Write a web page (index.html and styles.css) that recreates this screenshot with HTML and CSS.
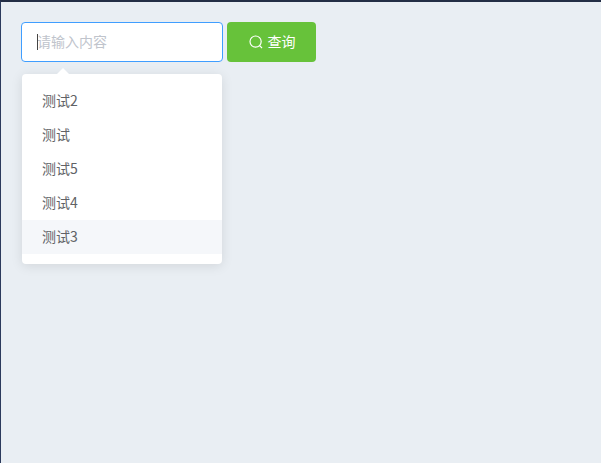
FILE: index.html
```html
<!DOCTYPE html>
<html lang="zh">
<head>
<meta charset="utf-8">
<title>查询</title>
<link rel="stylesheet" href="styles.css">
</head>
<body>
<div class="page">
  <div class="search">
    <div class="field">
      <div class="input"><span class="caret"></span><span class="placeholder">请输入内容</span></div>
      <div class="dropdown">
        <span class="arrow"></span>
        <ul class="list">
          <li class="item">测试2</li>
          <li class="item">测试</li>
          <li class="item">测试5</li>
          <li class="item">测试4</li>
          <li class="item hover">测试3</li>
        </ul>
      </div>
    </div>
    <button class="btn" type="button">
      <svg class="icon" width="14" height="14" viewBox="0 0 14 14" fill="none" stroke="#fff" stroke-width="1.2"><circle cx="6.6" cy="6.6" r="5.6"/><path d="M10.6 10.6L13 13"/></svg>
      <span class="label">查询</span>
    </button>
  </div>
</div>
</body>
</html>
```
FILE: styles.css
```css
* { box-sizing: border-box; }
html, body { margin: 0; height: 100%; }
body { font-family: "Noto Sans CJK SC", "Liberation Sans", sans-serif; overflow: hidden; }
.page {
  height: 463px;
  background: #e9eef3;
  border-top: 2px solid #232e45;
  border-left: 1px solid #2b3a5c;
  padding: 20px 20px;
}
.search { display: flex; gap: 4px; align-items: flex-start; }
.field { position: relative; width: 202px; }
.input {
  position: relative;
  height: 40px;
  background: #fff;
  border: 1px solid #409eff;
  border-radius: 4px;
  padding: 0 0 2px 15px;
  display: flex;
  align-items: center;
  font-size: 14px;
  color: #c0c4cc;
}
.caret { position: absolute; left: 15px; top: 11px; width: 1px; height: 16px; background: #444; }
.dropdown {
  position: absolute;
  left: 1px;
  top: 52px;
  width: 200px;
  background: #fff;
  border-radius: 4px;
  box-shadow: 0 2px 12px rgba(0,0,0,.1);
}
.arrow {
  position: absolute;
  left: 35px;
  top: -6px;
  width: 0;
  height: 0;
  border-left: 6px solid transparent;
  border-right: 6px solid transparent;
  border-bottom: 6px solid #fff;
}
.list { list-style: none; margin: 0; padding: 10px 0; }
.item { height: 34px; line-height: 32px; padding: 0 20px; font-size: 14px; color: #606266; }
.hover { background: #f5f7fa; }
.btn {
  width: 89px;
  height: 40px;
  border: 0;
  border-radius: 4px;
  background: #67c23a;
  color: #fff;
  font: inherit;
  font-size: 14px;
  display: flex;
  align-items: center;
  justify-content: center;
  gap: 5px;
  padding: 0 0 0 1px;
}
.label { line-height: 18px; margin-bottom: 2px; }
```
